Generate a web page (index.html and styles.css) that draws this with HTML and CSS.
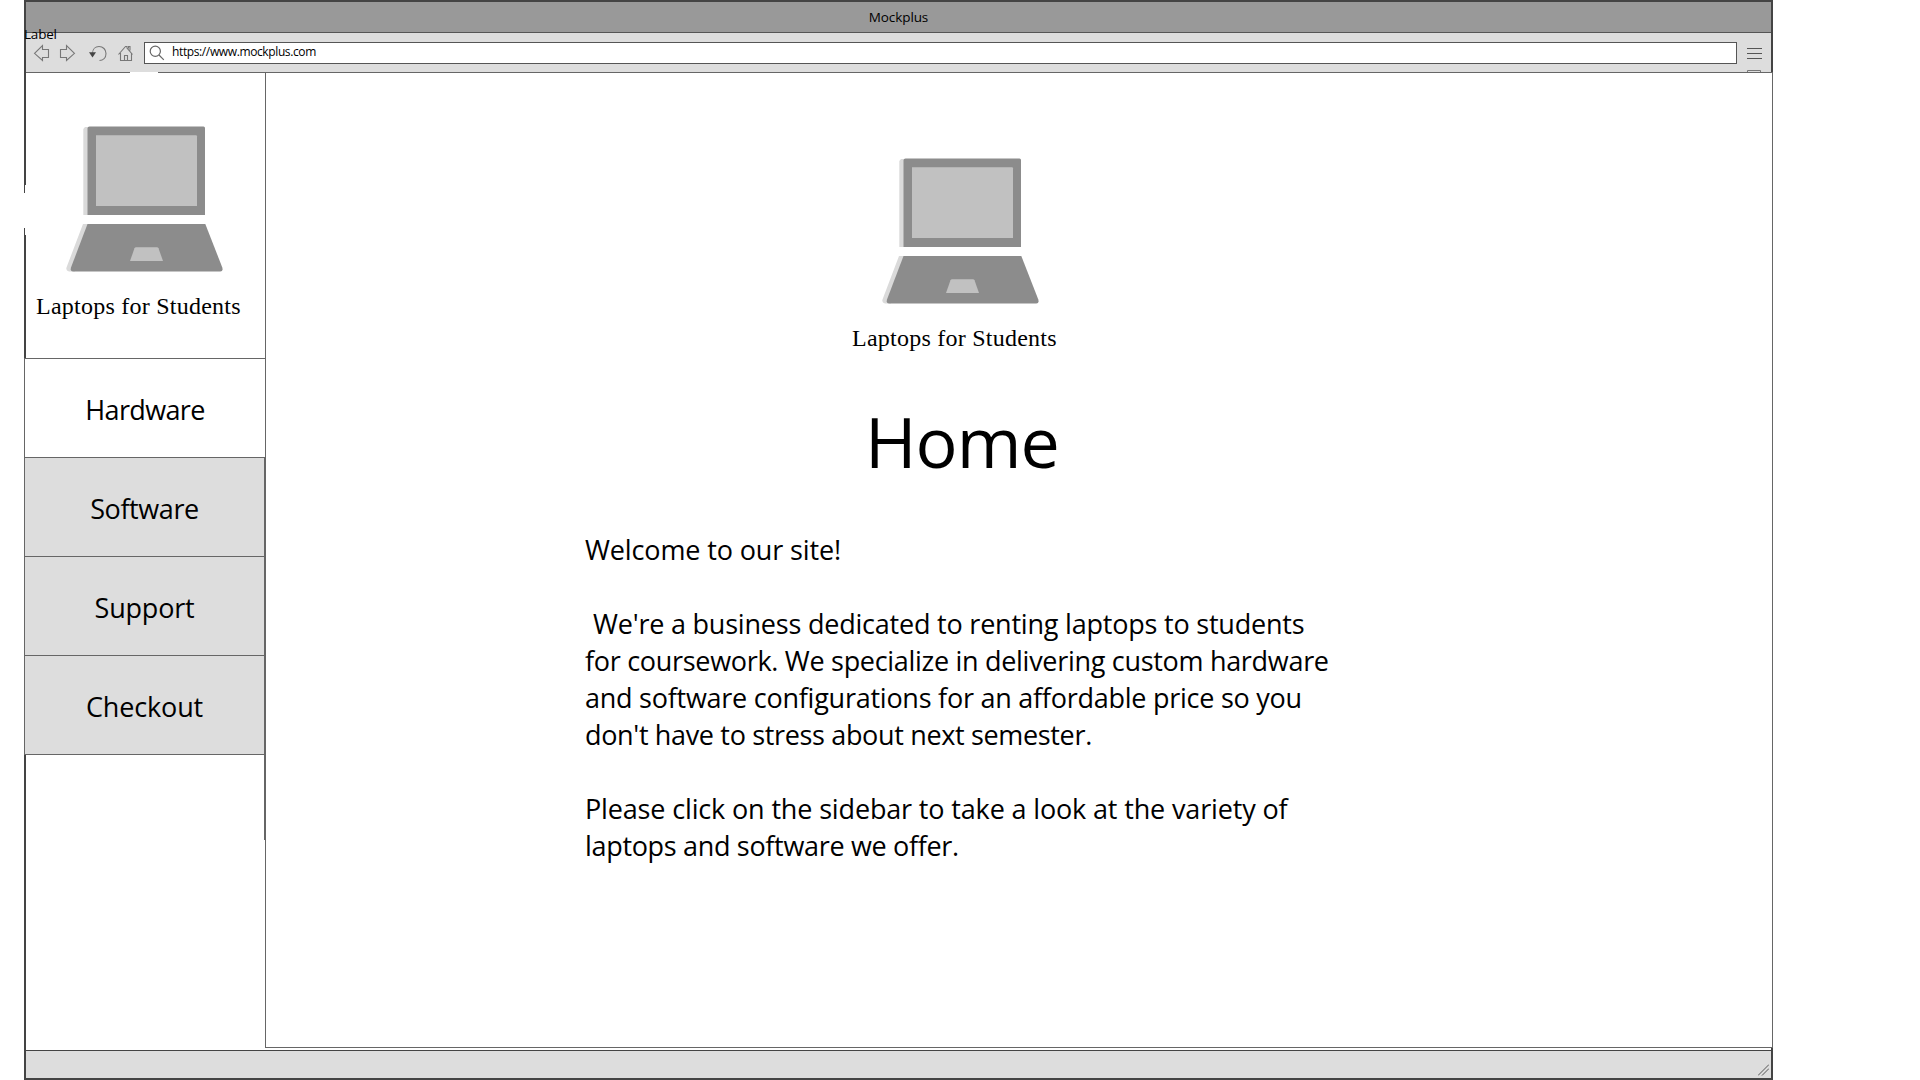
FILE: index.html
```html
<!DOCTYPE html>
<html lang="en">
<head>
<meta charset="utf-8">
<title>Mockplus</title>
<link rel="stylesheet" href="styles.css">
</head>
<body>
<svg class="defs" width="0" height="0" aria-hidden="true">
  <symbol id="laptop" viewBox="66 126 158 146">
    <path fill="#dadada" d="M85 127h6v88h-7.700V129zM83 224h8l-16 47.500h-6q-3.500-1-2.500-4z"/>
    <path fill="#8c8c8c" d="M89.500 126.500H203.500q1.500 0 1.500 1.500V215H87.500V128.500q0-2 2-2z"/>
    <path fill="#c1c1c1" d="M96 135.200H196q1 0 1 1V206H96z"/>
    <path fill="#8c8c8c" d="M87.500 224H205.300L222.300 267.500q1 4-2 4H73q-3 0-2-4z"/>
    <path fill="#c1c1c1" d="M136 247.300H157q1 0 1.500 1L163 261H130L134.500 248.300q.5-1 1.500-1z"/>
  </symbol>
</svg>
<div class="window">
  <header class="titlebar">Mockplus</header>
  <div class="toolbar">
    <svg class="nav-icons" width="108" height="22" viewBox="30 42 108 22">
      <g fill="none" stroke="#777" stroke-width="1.100">
        <path d="M34.500 53.300L42.500 45.500V49.500H48.500V57.500H42.500V60.500z"/>
        <path d="M74.500 53.300L66.500 45.500V49.500H60.500V57.500H66.500V60.500z"/>
        <path d="M92.500 53.500C92.500 49 95.500 46.500 99 46.500C103 46.500 106 49.500 106 53.500C106 58 103 60.500 99.500 60.500"/>
        <path d="M118.500 54.500L125.500 46.500H127V48L132.500 54.500M128.500 48.500V46.500H130V50.500M120.500 53V60.500H131.500V53M124.500 60.500V55.500H127.500V60.500"/>
      </g>
      <path fill="#444" d="M89 52.300H96L92.500 57.500z"/>
    </svg>
    <div class="address">
      <svg width="16" height="16" viewBox="0 0 16 16" fill="none" stroke="#666" stroke-width="1.200"><circle cx="6.300" cy="6.300" r="5.100"/><path d="M10 10l4.800 4.800"/></svg>
      <span>https://www.mockplus.com</span>
    </div>
    <svg class="menu" width="15" height="25" viewBox="0 0 15 25" fill="none" stroke="#555"><path d="M0 1.500h15M0 6.500h15M0 11.500h15"/><path stroke="#777" d="M.5 26V23.500h13V26"/></svg>
  </div>
  <div class="body">
    <aside class="sidebar">
      <div class="brand side-brand">
        <svg class="laptop"><use href="#laptop"/></svg>
        <p>Laptops for Students</p>
      </div>
      <nav>
        <a class="item active hardware">Hardware</a>
        <a class="item software">Software</a>
        <a class="item support">Support</a>
        <a class="item checkout">Checkout</a>
        <div class="nav-end"></div>
      </nav>
    </aside>
    <main class="main">
      <div class="brand main-brand">
        <svg class="laptop"><use href="#laptop"/></svg>
        <p>Laptops for Students</p>
      </div>
      <h1>Home</h1>
      <div class="copy">
        <p><span class="l1">Welcome to our site!</span></p>
        <p>
          <span class="l2">We're a business dedicated to renting laptops to students</span>
          <span class="l3">for coursework. We specialize in delivering custom hardware</span>
          <span class="l4">and software configurations for an affordable price so you</span>
          <span class="l5">don't have to stress about next semester.</span>
        </p>
        <p>
          <span class="l6">Please click on the sidebar to take a look at the variety of</span>
          <span class="l7">laptops and software we offer.</span>
        </p>
      </div>
    </main>
  </div>
  <footer class="statusbar">
    <svg width="11" height="12" viewBox="0 0 11 12" stroke="#555" fill="none"><path d="M0 11.500L11 .5M4 11.500L11 4.500"/></svg>
  </footer>
  <span class="label">Label</span>
  <i class="gap gap-top"></i>
  <i class="gap gap-left"></i>
  <i class="gap gap-left-inner"></i>
</div>
</body>
</html>
```
FILE: styles.css
```css
* { box-sizing: border-box; }
body, p, h1 { margin: 0; }
body {
  background: #fff;
  color: #000;
  font-family: "Open Sans", "Noto Sans", sans-serif;
  overflow: hidden;
}
svg { display: block; flex: none; }
.defs { position: absolute; }

.window {
  position: relative;
  display: flex;
  flex-direction: column;
  width: 1749px;
  height: 1080px;
  margin-left: 24px;
  border: 2px solid #444;
}
.titlebar {
  height: 31px;
  flex: none;
  background: #999;
  border-bottom: 1px solid #555;
  font-size: 13.5px;
  letter-spacing: -0.1px;
  line-height: 30px;
  text-align: center;
}
.toolbar {
  display: flex;
  align-items: flex-start;
  height: 39px;
  flex: none;
  padding: 9px 9px 0 4px;
  background: #ddd;
}
.address {
  display: flex;
  align-items: center;
  flex: 1;
  height: 22px;
  margin-left: 6px;
  padding-left: 4px;
  gap: 7px;
  background: #fff;
  border: 1px solid #555;
  font-size: 12px;
  line-height: 18px;
  letter-spacing: -0.38px;
}
.address span { padding-bottom: 2px; }
.menu { margin: 5px 0 0 10px; }

.body {
  display: flex;
  height: 978px;
  flex: none;
  margin: 0 -2px;
}
.sidebar { width: 241px; flex: none; }
.brand p {
  margin-top: 18px;
  font: 24px/32px "Liberation Serif", serif;
  letter-spacing: 0.24px;
  white-space: nowrap;
}
.laptop { width: 158px; height: 146px; margin-left: 30px; }
.side-brand {
  height: 286px;
  margin-left: 2px;
  padding: 53px 0 0 10px;
  border-top: 1px solid #666;
}
.item {
  display: block;
  height: 99px;
  padding-top: 3px;
  background: #ddd;
  border: solid #666;
  border-width: 1px 1px 0;
  font-size: 27px;
  line-height: 95px;
  text-align: center;
}
.active { background: #fff; border-right: 0; }
.hardware { letter-spacing: -0.65px; }
.software { letter-spacing: -0.4px; }
.support { letter-spacing: -0.2px; }
.checkout { letter-spacing: -0.15px; }
.nav-end {
  height: 86px;
  border-top: 1px solid #666;
  border-right: 1px solid #666;
}

.main {
  flex: 1;
  height: 976px;
  padding-top: 85px;
  background: #fff;
  border: 1px solid #666;
}
.main-brand { margin-left: 586px; }
h1 {
  margin: 40px 0 0 599px;
  font-size: 70px;
  font-weight: 400;
  line-height: 94px;
  letter-spacing: -1px;
}
.copy {
  display: flex;
  flex-direction: column;
  gap: 37px;
  margin: 43px 0 0 319px;
  font-size: 27px;
  line-height: 37px;
  white-space: nowrap;
}
.copy span { display: block; }
.l1 { letter-spacing: -0.13px; }
.l2 { padding-left: 8px; letter-spacing: -0.21px; }
.l3 { letter-spacing: -0.3px; }
.l4 { letter-spacing: -0.25px; }
.l5 { letter-spacing: -0.34px; }
.l6 { letter-spacing: -0.15px; }
.l7 { letter-spacing: -0.32px; }

.statusbar {
  display: flex;
  justify-content: flex-end;
  align-items: flex-end;
  flex: 1;
  padding: 0 2px 2px 0;
  background: #ddd;
  border-top: 1px solid #444;
}

.label {
  position: absolute;
  left: -2px;
  top: 22px;
  font-size: 13.5px;
  line-height: 20px;
  letter-spacing: -0.2px;
}
/* breaks in the frame's outline */
.gap { position: absolute; background: #fff; }
.gap-top { left: 104px; top: 70px; width: 28px; height: 1px; }
.gap-left { left: -2px; top: 191px; width: 2px; height: 35px; }
.gap-left-inner { left: -1px; top: 183px; width: 1px; height: 50px; }
```
